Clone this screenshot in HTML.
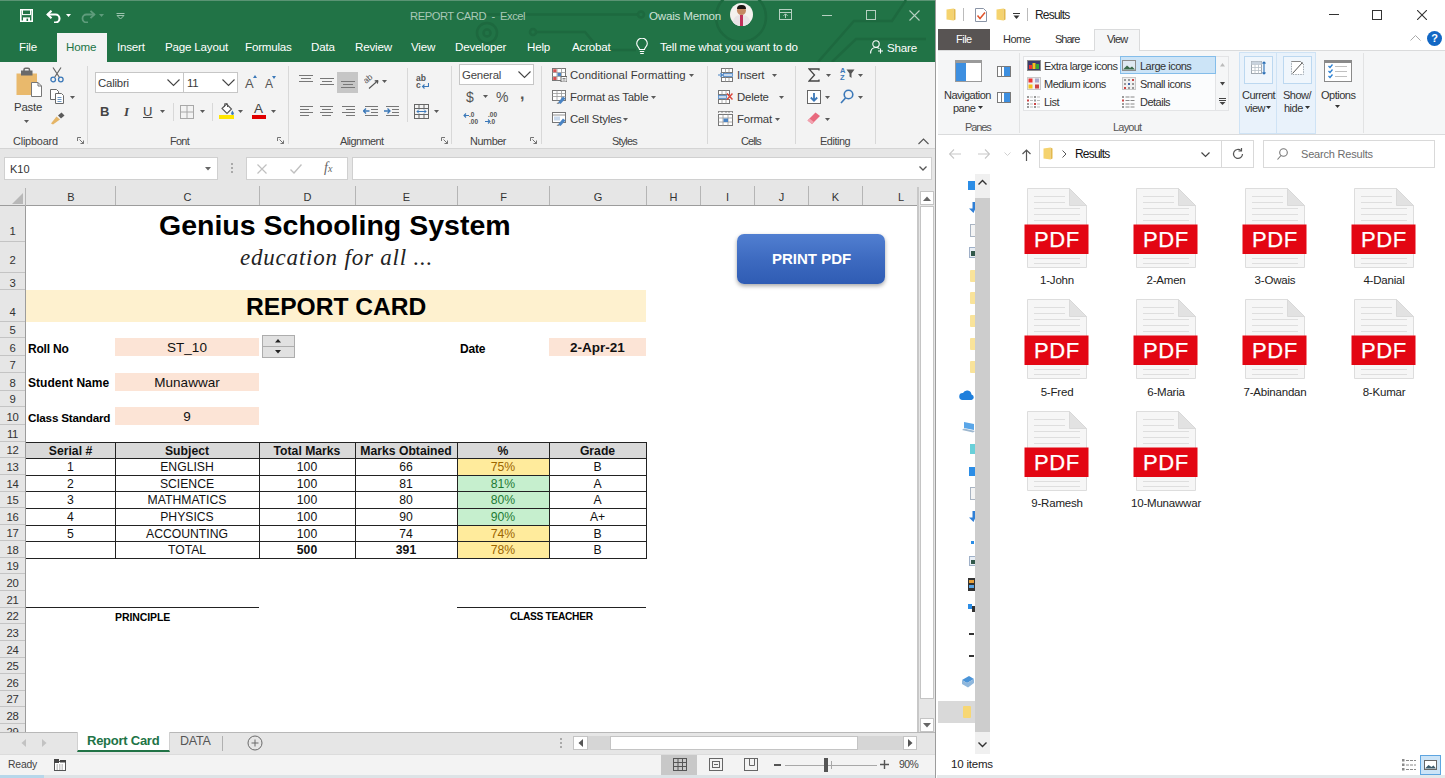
<!DOCTYPE html>
<html>
<head>
<meta charset="utf-8">
<title>Report Card</title>
<style>
*{box-sizing:border-box;margin:0;padding:0}
html,body{width:1445px;height:778px;overflow:hidden;background:#fff;font-family:"Liberation Sans",sans-serif;}
#root{position:absolute;left:0;top:0;width:1445px;height:778px;overflow:hidden;background:#fff}
.a{position:absolute}
.t{position:absolute;white-space:nowrap;line-height:1}
/* ---------- EXCEL ---------- */
#xl{position:absolute;left:0;top:0;width:936px;height:778px;background:#e6e6e6;overflow:hidden}
#xl-title{position:absolute;left:0;top:0;width:936px;height:62px;background:#217346}
#xl-ribbon{position:absolute;left:0;top:62px;width:936px;height:87px;background:#f3f3f3;border-bottom:1px solid #d4d4d4}
.xtab{position:absolute;top:40px;font-size:11.6px;letter-spacing:-0.2px;color:#fff;white-space:nowrap;line-height:14px}
.rl{position:absolute;font-size:10.9px;letter-spacing:-0.2px;color:#444;white-space:nowrap;line-height:12px;top:135px}
.rt{position:absolute;font-size:11.4px;letter-spacing:-0.2px;color:#3a3a3a;white-space:nowrap;line-height:14px}
.vsep{position:absolute;top:66px;width:1px;height:78px;background:#d8d8d8}
.ch{position:absolute;top:186px;height:19px;margin-left:1px;font-size:11px;color:#333;text-align:center;line-height:23px;border-right:1px solid #b5b5b5}
.rh{position:absolute;left:0;width:25px;font-size:11.3px;letter-spacing:-0.4px;color:#333;text-align:center;border-bottom:1px solid #c4c4c4}
.cell{position:absolute;white-space:nowrap;text-align:center;font-size:13px;color:#111;line-height:1}
.hl{position:absolute;height:1px;background:#222}
.vl{position:absolute;width:1px;background:#222}
/* ---------- EXPLORER ---------- */
#ex{position:absolute;left:937px;top:0;width:508px;height:778px;background:#fff;overflow:hidden}
.et{position:absolute;font-size:11px;letter-spacing:-0.5px;color:#222;white-space:nowrap;line-height:13px}
.pdf{position:absolute;width:66px;height:84px}
.pl{position:absolute;font-size:11.5px;letter-spacing:-0.2px;color:#222;white-space:nowrap;text-align:center;width:110px;line-height:13px}
</style>
</head>
<body>
<div id="root">

<!-- ================= EXCEL ================= -->
<div id="xl">
<div id="xl-title"></div>
<div id="xl-ribbon"></div>
<!-- top highlight line -->
<div class="a" style="left:0;top:0;width:936px;height:1px;background:#5a9474"></div>
<!-- faint circuit pattern -->
<svg class="a" style="left:440px;top:0" width="496" height="62" viewBox="0 0 496 62" fill="none" stroke="#1d693f" stroke-width="2.500">
<path d="M-40 14.500H197"/><circle cx="201" cy="14.500" r="3"/>
<circle cx="47" cy="33" r="10"/><circle cx="47" cy="33" r="3.500"/>
<circle cx="93" cy="32" r="3"/><path d="M96 32H145L160 50H196"/>
<circle cx="301" cy="17" r="25"/>
<path d="M378 62L414 21H452L466 0"/><path d="M392 62L416 39H486"/>
</svg>
<!-- QAT icons -->
<svg class="a" style="left:20px;top:9px" width="13" height="13" viewBox="0 0 13 13"><path d="M0.800 0.800h11.400v11.400h-11.400z" fill="none" stroke="#fff" stroke-width="1.600"/><rect x="2.5" y="1" width="8" height="4.6" fill="#217346" stroke="#fff" stroke-width="1"/><rect x="3" y="8.4" width="7" height="4" fill="#fff"/><rect x="6.5" y="9.6" width="1.6" height="2.4" fill="#217346"/></svg>
<svg class="a" style="left:46px;top:10px" width="16" height="13" viewBox="0 0 16 13" fill="none" stroke="#fff" stroke-width="2.100"><path d="M1.5 4.5h8a4 4 0 0 1 0 8h-1.5"/><path d="M5.5 0.8L1.6 4.5l3.9 3.7"/></svg>
<svg class="a" style="left:66px;top:14px" width="5" height="3" viewBox="0 0 5 3"><path d="M0 0h5l-2.500 3z" fill="#fff"/></svg>
<svg class="a" style="left:80px;top:10px" width="16" height="13" viewBox="0 0 16 13" fill="none" stroke="#5f9c7c" stroke-width="1.8"><path d="M14.5 4.5h-8a4 4 0 0 0 0 8h1.5"/><path d="M10.5 0.8l3.9 3.7-3.9 3.7"/></svg>
<svg class="a" style="left:99px;top:14px" width="5" height="3" viewBox="0 0 5 3"><path d="M0 0h5l-2.500 3z" fill="#5f9c7c"/></svg>
<svg class="a" style="left:116px;top:13px" width="9" height="7" viewBox="0 0 9 7" fill="none" stroke="#9cc3ae" stroke-width="1"><path d="M0.5 0.5h8M1 2.5l3.5 3.5 3.5-3.5z"/></svg>
<!-- title text -->
<div class="t" style="left:410px;top:9px;font-size:11.2px;letter-spacing:-0.45px;color:#a9c9b7;line-height:14px">REPORT CARD&nbsp;&nbsp;-&nbsp;&nbsp;Excel</div>
<div class="t" style="left:649px;top:9px;font-size:11.6px;letter-spacing:-0.2px;color:#cfe1d7;line-height:14px">Owais Memon</div>
<!-- avatar -->
<div class="a" style="left:730px;top:3px;width:23px;height:23px;border-radius:50%;background:#f4f1ee;overflow:hidden">
 <div class="a" style="left:7px;top:3px;width:9px;height:9px;border-radius:50%;background:#c48a63"></div>
 <div class="a" style="left:7px;top:2px;width:9px;height:4px;border-radius:4px 4px 0 0;background:#1d1412"></div>
 <div class="a" style="left:3px;top:12px;width:17px;height:14px;border-radius:7px 7px 0 0;background:#e9e4e6"></div>
 <div class="a" style="left:10px;top:12px;width:3px;height:11px;background:#c2325a"></div>
</div>
<!-- window controls -->
<svg class="a" style="left:779px;top:9px" width="13" height="11" viewBox="0 0 13 11" fill="none" stroke="#b5d0c1" stroke-width="1"><rect x="0.5" y="0.5" width="12" height="10"/><path d="M0.5 3.5h12M6.5 9V5M4.5 6.8l2-2 2 2"/></svg>
<div class="a" style="left:822px;top:15px;width:10px;height:1px;background:#b5d0c1"></div>
<div class="a" style="left:866px;top:10px;width:10px;height:10px;border:1px solid #b5d0c1"></div>
<svg class="a" style="left:909px;top:10px" width="11" height="11" viewBox="0 0 11 11" stroke="#b5d0c1" stroke-width="1.1"><path d="M0.5 0.5l10 10M10.5 0.5l-10 10"/></svg>
<!-- tabs -->
<div class="a" style="left:57px;top:33px;width:50px;height:30px;background:#f3f3f3"></div>
<div class="xtab" style="left:19px">File</div>
<div class="xtab" style="left:66px;color:#217346">Home</div>
<div class="xtab" style="left:117px">Insert</div>
<div class="xtab" style="left:165px">Page Layout</div>
<div class="xtab" style="left:245px">Formulas</div>
<div class="xtab" style="left:311px">Data</div>
<div class="xtab" style="left:355px">Review</div>
<div class="xtab" style="left:411px">View</div>
<div class="xtab" style="left:455px">Developer</div>
<div class="xtab" style="left:527px">Help</div>
<div class="xtab" style="left:572px">Acrobat</div>
<svg class="a" style="left:636px;top:38px" width="12" height="17" viewBox="0 0 12 17" fill="none" stroke="#fff" stroke-width="1.1"><path d="M3.5 11.5c0-2-2.8-3-2.8-6a5.3 5.3 0 0 1 10.6 0c0 3-2.800 4-2.800 6z"/><path d="M3.800 13.500h4.400M4.200 15.500h3.600"/></svg>
<div class="xtab" style="left:660px">Tell me what you want to do</div>
<svg class="a" style="left:870px;top:40px" width="14" height="14" viewBox="0 0 14 14" fill="none" stroke="#fff" stroke-width="1.1"><circle cx="6" cy="4" r="3.2"/><path d="M0.600 13.500c0-4 2.500-6 5.400-6 1.500 0 2.600 0.500 3.400 1.200"/><path d="M10.500 8.500v5M8 11h5"/></svg>
<div class="xtab" style="left:887px;top:41px">Share</div>

<!-- ===== Clipboard ===== -->
<svg class="a" style="left:16px;top:67px" width="28" height="31" viewBox="0 0 28 31">
 <rect x="0.500" y="6.500" width="20.500" height="21.500" fill="#e9b96c"/>
 <rect x="5" y="3.500" width="11.500" height="5" fill="#6a6a6a"/><rect x="8" y="1.200" width="5.500" height="4" rx="1.500" fill="none" stroke="#6a6a6a" stroke-width="1.500"/>
 <path d="M15.500 15.500h6.500l3.500 3.500v10.500h-10z" fill="#fff" stroke="#777"/><path d="M22 15.500v3.500h3.500" fill="none" stroke="#777"/>
</svg>
<div class="rt" style="left:14px;top:100px">Paste</div>
<svg class="a" style="left:24px;top:120px" width="5" height="3" viewBox="0 0 5 3"><path d="M0 0h5l-2.500 3z" fill="#5a5a5a"/></svg>
<svg class="a" style="left:50px;top:67px" width="14" height="16" viewBox="0 0 14 16" fill="none"><path d="M3 0.500l6.500 10M11 0.500l-6.500 10" stroke="#666" stroke-width="1.2"/><circle cx="3.200" cy="12.500" r="2.300" stroke="#3b78b8" stroke-width="1.300"/><circle cx="10.800" cy="12.500" r="2.300" stroke="#3b78b8" stroke-width="1.300"/></svg>
<svg class="a" style="left:50px;top:89px" width="14" height="15" viewBox="0 0 14 15" fill="#fff" stroke="#6a6a6a"><path d="M0.500 0.500h6l2 2v8h-8z"/><path d="M5.500 4.500h6l2 2v8h-8z"/><path d="M7.500 8.500h4M7.500 10.500h4M7.500 12.500h4" stroke="#4a7fb5" stroke-width="0.800"/></svg>
<svg class="a" style="left:70px;top:96px" width="5" height="3" viewBox="0 0 5 3"><path d="M0 0h5l-2.500 3z" fill="#5a5a5a"/></svg>
<svg class="a" style="left:50px;top:112px" width="15" height="13" viewBox="0 0 15 13"><path d="M8 3.500l3.500-3 3 3-3.500 3z" fill="#5a5a5a"/><path d="M1 11.500l5.500-7 3.500 3-7 5z" fill="#e5b566"/></svg>
<div class="rl" style="left:13px">Clipboard</div>
<svg class="a" style="left:77px;top:137px" width="7" height="7" viewBox="0 0 7 7" fill="none" stroke="#666" stroke-width="0.900"><path d="M0.500 4V0.500H4M2.500 2.500l4 4M6.500 3.500v3h-3"/></svg>
<div class="vsep" style="left:87px"></div>

<!-- ===== Font ===== -->
<div class="a" style="left:95px;top:72px;width:89px;height:21px;background:#fff;border:1px solid #c6c6c6"></div>
<div class="a" style="left:184px;top:72px;width:54px;height:21px;background:#fff;border:1px solid #c6c6c6;border-left:none"></div>
<div class="rt" style="left:98px;top:76px">Calibri</div>
<div class="rt" style="left:187px;top:76px">11</div>
<svg class="a" style="left:167px;top:79px" width="13" height="8" viewBox="0 0 13 8" fill="none" stroke="#444" stroke-width="1.100"><path d="M0.500 0.500l6 6 6-6"/></svg>
<svg class="a" style="left:222px;top:79px" width="13" height="8" viewBox="0 0 13 8" fill="none" stroke="#444" stroke-width="1.100"><path d="M0.500 0.500l6 6 6-6"/></svg>
<div class="t" style="left:245px;top:77px;font-size:13px;color:#555">A</div>
<svg class="a" style="left:253px;top:75px" width="4" height="3" viewBox="0 0 4 3"><path d="M0 3h4l-2-3z" fill="#3b78b8"/></svg>
<div class="t" style="left:265px;top:78px;font-size:12px;color:#555">A</div>
<svg class="a" style="left:272px;top:76px" width="4" height="3" viewBox="0 0 4 3"><path d="M0 0h4l-2 3z" fill="#3b78b8"/></svg>
<div class="t" style="left:100px;top:105px;font-size:13px;font-weight:bold;color:#444">B</div>
<div class="t" style="left:124px;top:105px;font-size:13px;font-style:italic;font-family:'Liberation Serif',serif;font-weight:bold;color:#444">I</div>
<div class="t" style="left:143px;top:105px;font-size:13px;color:#444;text-decoration:underline">U</div>
<svg class="a" style="left:160px;top:110px" width="5" height="3" viewBox="0 0 5 3"><path d="M0 0h5l-2.500 3z" fill="#5a5a5a"/></svg>
<div class="a" style="left:173px;top:103px;width:1px;height:18px;background:#d8d8d8"></div>
<svg class="a" style="left:180px;top:105px" width="14" height="14" viewBox="0 0 14 14" fill="none" stroke="#a8a8a8" stroke-width="1"><rect x="0.500" y="0.500" width="13" height="13"/><path d="M7 0.500v13M0.500 7h13"/></svg>
<svg class="a" style="left:200px;top:110px" width="5" height="3" viewBox="0 0 5 3"><path d="M0 0h5l-2.500 3z" fill="#5a5a5a"/></svg>
<div class="a" style="left:212px;top:103px;width:1px;height:18px;background:#d8d8d8"></div>
<svg class="a" style="left:219px;top:103px" width="16" height="12" viewBox="0 0 16 12" fill="none"><path d="M3 5.500l4.500-4.500 5 5-4.500 4.500z" fill="#fff" stroke="#555" stroke-width="1.100"/><path d="M5.500 4V1.500a1.500 1.500 0 0 1 3 0V4" stroke="#555" stroke-width="1"/><path d="M13.300 7.500c0.900 1.300 1.600 2.200 1.600 3a1.400 1.400 0 0 1-2.800 0c0-0.800 0.600-1.700 1.200-3z" fill="#3b78b8"/></svg>
<div class="a" style="left:219px;top:115px;width:15px;height:4px;background:#ffe600"></div>
<svg class="a" style="left:238px;top:110px" width="5" height="3" viewBox="0 0 5 3"><path d="M0 0h5l-2.500 3z" fill="#5a5a5a"/></svg>
<div class="t" style="left:254px;top:102px;font-size:13.500px;color:#444">A</div>
<div class="a" style="left:252px;top:115px;width:14px;height:4px;background:#e00000"></div>
<svg class="a" style="left:271px;top:110px" width="5" height="3" viewBox="0 0 5 3"><path d="M0 0h5l-2.500 3z" fill="#5a5a5a"/></svg>
<div class="rl" style="left:170px;letter-spacing:-0.7px">Font</div>
<svg class="a" style="left:277px;top:137px" width="7" height="7" viewBox="0 0 7 7" fill="none" stroke="#666" stroke-width="0.900"><path d="M0.500 4V0.500H4M2.500 2.500l4 4M6.500 3.500v3h-3"/></svg>
<div class="vsep" style="left:288px"></div>

<!-- ===== Alignment ===== -->
<svg class="a" style="left:299px;top:75px" width="14" height="8" viewBox="0 0 14 8" stroke="#777" stroke-width="1"><path d="M0 0.500h14M2 3.500h10M0 6.500h14"/></svg>
<svg class="a" style="left:320px;top:78px" width="14" height="8" viewBox="0 0 14 8" stroke="#777" stroke-width="1"><path d="M0 0.500h14M2 3.500h10M0 6.500h14"/></svg>
<div class="a" style="left:337px;top:72px;width:21px;height:21px;background:#c6c6c6"></div>
<svg class="a" style="left:341px;top:81px" width="14" height="8" viewBox="0 0 14 8" stroke="#777" stroke-width="1"><path d="M0 0.500h14M2 3.500h10M0 6.500h14"/></svg>
<svg class="a" style="left:364px;top:73px" width="17" height="17" viewBox="0 0 17 17" fill="none"><text x="0" y="0" transform="translate(2,11) rotate(-40)" font-family="Liberation Sans, sans-serif" font-size="8.500" fill="#555">ab</text><path d="M5 15.500l9-8M14 7.500l-3.300 0.400M14 7.500l-0.600 3.200" stroke="#555" stroke-width="1.100"/></svg>
<svg class="a" style="left:382px;top:80px" width="5" height="3" viewBox="0 0 5 3"><path d="M0 0h5l-2.500 3z" fill="#5a5a5a"/></svg>
<div class="t" style="left:416px;top:75px;font-size:8.500px;font-weight:bold;color:#555;line-height:7px">ab<br>c</div>
<svg class="a" style="left:421px;top:83px" width="8" height="6" viewBox="0 0 8 6" fill="none" stroke="#3b78b8" stroke-width="1.100"><path d="M7.500 0v3.500h-6M3.500 1.500l-2 2 2 2"/></svg>
<svg class="a" style="left:300px;top:106px" width="13" height="11" viewBox="0 0 13 11" stroke="#777" stroke-width="1"><path d="M0 0.500h13M0 3.500h9M0 6.500h13M0 9.500h9"/></svg>
<svg class="a" style="left:320px;top:106px" width="13" height="11" viewBox="0 0 13 11" stroke="#777" stroke-width="1"><path d="M0 0.500h13M2 3.500h9M0 6.500h13M2 9.500h9"/></svg>
<svg class="a" style="left:342px;top:106px" width="13" height="11" viewBox="0 0 13 11" stroke="#777" stroke-width="1"><path d="M0 0.500h13M4 3.500h9M0 6.500h13M4 9.500h9"/></svg>
<svg class="a" style="left:363px;top:106px" width="15" height="11" viewBox="0 0 15 11" fill="none"><path d="M2 0.500h13M8 3.500h7M8 6.500h7M2 9.500h13" stroke="#777"/><path d="M6.500 5h-6M3 2.500l-2.500 2.500 2.500 2.500" stroke="#3b78b8" stroke-width="1.300"/></svg>
<svg class="a" style="left:384px;top:106px" width="15" height="11" viewBox="0 0 15 11" fill="none"><path d="M2 0.500h13M8 3.500h7M8 6.500h7M2 9.500h13" stroke="#777"/><path d="M0 5h6M3.500 2.500l2.500 2.500-2.500 2.500" stroke="#3b78b8" stroke-width="1.300"/></svg>
<div class="a" style="left:407px;top:68px;width:1px;height:54px;background:#d8d8d8"></div>
<svg class="a" style="left:414px;top:104px" width="15" height="15" viewBox="0 0 15 15" fill="none" stroke="#666"><rect x="0.500" y="0.500" width="14" height="14"/><path d="M0.500 4.500h14M0.500 10.500h14M5 0.500v4M10 0.500v4M5 10.500v4M10 10.500v4"/><path d="M3 7.500h9M5 5.500l-2 2 2 2M10 5.500l2 2-2 2" stroke="#3b78b8"/></svg>
<svg class="a" style="left:434px;top:110px" width="5" height="3" viewBox="0 0 5 3"><path d="M0 0h5l-2.500 3z" fill="#5a5a5a"/></svg>
<div class="rl" style="left:340px;letter-spacing:-0.55px">Alignment</div>
<svg class="a" style="left:441px;top:137px" width="7" height="7" viewBox="0 0 7 7" fill="none" stroke="#666" stroke-width="0.900"><path d="M0.500 4V0.500H4M2.500 2.500l4 4M6.500 3.500v3h-3"/></svg>
<div class="vsep" style="left:451px"></div>

<!-- ===== Number ===== -->
<div class="a" style="left:459px;top:64px;width:75px;height:21px;background:#fff;border:1px solid #c6c6c6"></div>
<div class="rt" style="left:462px;top:68px;color:#444">General</div>
<svg class="a" style="left:518px;top:71px" width="13" height="8" viewBox="0 0 13 8" fill="none" stroke="#444" stroke-width="1.100"><path d="M0.500 0.500l6 6 6-6"/></svg>
<div class="t" style="left:466px;top:90px;font-size:14px;color:#555">$</div>
<svg class="a" style="left:483px;top:95px" width="5" height="3" viewBox="0 0 5 3"><path d="M0 0h5l-2.500 3z" fill="#5a5a5a"/></svg>
<div class="t" style="left:496px;top:90px;font-size:14px;color:#555">%</div>
<div class="t" style="left:520px;top:86px;font-size:16px;font-weight:bold;color:#555">,</div>
<div class="t" style="left:469px;top:112px;font-size:6.500px;color:#555;line-height:6.500px;font-weight:bold">.0<br>.00</div>
<svg class="a" style="left:463px;top:113px" width="6" height="5" viewBox="0 0 6 5" fill="none" stroke="#3b78b8" stroke-width="1.100"><path d="M6 2.500h-5M3 0.500l-2 2 2 2"/></svg>
<div class="t" style="left:488px;top:112px;font-size:6.500px;color:#555;line-height:6.500px;font-weight:bold">.00<br>&nbsp;.0</div>
<svg class="a" style="left:485px;top:119px" width="6" height="5" viewBox="0 0 6 5" fill="none" stroke="#3b78b8" stroke-width="1.100"><path d="M0 2.500h5M3 0.500l2 2-2 2"/></svg>
<div class="rl" style="left:470px;letter-spacing:-0.45px">Number</div>
<svg class="a" style="left:530px;top:137px" width="7" height="7" viewBox="0 0 7 7" fill="none" stroke="#666" stroke-width="0.900"><path d="M0.500 4V0.500H4M2.500 2.500l4 4M6.500 3.500v3h-3"/></svg>
<div class="vsep" style="left:541px"></div>

<!-- ===== Styles ===== -->
<svg class="a" style="left:552px;top:68px" width="15" height="14" viewBox="0 0 15 14" fill="none"><rect x="0.500" y="0.500" width="13" height="12" fill="#fff" stroke="#777"/><path d="M0.500 4.500h13M0.500 8.500h13M5 0.500v12M9.500 0.500v12" stroke="#999" stroke-width="0.800"/><rect x="1.200" y="1.200" width="3.300" height="3" fill="#d65050"/><rect x="5.500" y="5" width="3.500" height="3" fill="#4a84c4"/><rect x="1.200" y="9" width="3.300" height="3" fill="#d65050"/><rect x="9" y="8.500" width="6" height="5.500" fill="#fff" stroke="#666"/><path d="M10.500 10.500h3M10.500 12h3" stroke="#666" stroke-width="0.800"/></svg>
<div class="rt" style="left:570px;top:68px;letter-spacing:0.05px">Conditional Formatting</div>
<svg class="a" style="left:689px;top:74px" width="5" height="3" viewBox="0 0 5 3"><path d="M0 0h5l-2.500 3z" fill="#5a5a5a"/></svg>
<svg class="a" style="left:552px;top:90px" width="15" height="14" viewBox="0 0 15 14" fill="none"><rect x="0.500" y="0.500" width="13" height="10" fill="#fff" stroke="#777"/><path d="M0.500 3.500h13M0.500 6.500h13M5 0.500v10M9.500 0.500v10" stroke="#999" stroke-width="0.800"/><path d="M6 12.500l5-6 2.500 2-5 5.500z" fill="#4a84c4"/><path d="M4.500 13.500l1.500-1 1.500 1.300z" fill="#555"/></svg>
<div class="rt" style="left:570px;top:90px">Format as Table</div>
<svg class="a" style="left:651px;top:96px" width="5" height="3" viewBox="0 0 5 3"><path d="M0 0h5l-2.500 3z" fill="#5a5a5a"/></svg>
<svg class="a" style="left:552px;top:112px" width="15" height="14" viewBox="0 0 15 14" fill="none"><rect x="0.500" y="0.500" width="13" height="10" fill="#fff" stroke="#777"/><path d="M0.500 3h13" stroke="#777" stroke-width="0.800"/><rect x="2" y="4.500" width="6" height="4" fill="#c9d9ec"/><path d="M6 12.500l5-6 2.500 2-5 5.500z" fill="#4a84c4"/><path d="M4.500 13.500l1.500-1 1.500 1.300z" fill="#555"/></svg>
<div class="rt" style="left:570px;top:112px">Cell Styles</div>
<svg class="a" style="left:623px;top:118px" width="5" height="3" viewBox="0 0 5 3"><path d="M0 0h5l-2.500 3z" fill="#5a5a5a"/></svg>
<div class="rl" style="left:612px;letter-spacing:-0.8px">Styles</div>
<div class="vsep" style="left:707px"></div>

<!-- ===== Cells ===== -->
<svg class="a" style="left:718px;top:68px" width="15" height="14" viewBox="0 0 15 14" fill="none"><rect x="3.500" y="0.500" width="11" height="4" fill="#fff" stroke="#777"/><rect x="3.500" y="9.500" width="11" height="4" fill="#fff" stroke="#777"/><path d="M7.500 0.500v4M11 0.500v4M7.500 9.500v4M11 9.500v4" stroke="#999" stroke-width="0.800"/><rect x="5.500" y="5.500" width="9" height="3" fill="#c9d9ec" stroke="#4a84c4" stroke-width="0.800"/><path d="M0 7h4M2.500 5l2 2-2 2" stroke="#4a84c4" stroke-width="1.200"/></svg>
<div class="rt" style="left:737px;top:68px">Insert</div>
<svg class="a" style="left:772px;top:74px" width="5" height="3" viewBox="0 0 5 3"><path d="M0 0h5l-2.500 3z" fill="#5a5a5a"/></svg>
<svg class="a" style="left:718px;top:90px" width="15" height="14" viewBox="0 0 15 14" fill="none"><rect x="0.500" y="0.500" width="11" height="4" fill="#fff" stroke="#777"/><rect x="0.500" y="9.500" width="11" height="4" fill="#fff" stroke="#777"/><path d="M4 0.500v4M8 0.500v4M4 9.500v4M8 9.500v4" stroke="#999" stroke-width="0.800"/><rect x="0.500" y="5.500" width="8" height="3" fill="#c9d9ec" stroke="#4a84c4" stroke-width="0.800"/><path d="M9 3.500l5.500 6M14.500 3.500l-5.500 6" stroke="#d9453a" stroke-width="1.500"/></svg>
<div class="rt" style="left:737px;top:90px">Delete</div>
<svg class="a" style="left:779px;top:96px" width="5" height="3" viewBox="0 0 5 3"><path d="M0 0h5l-2.500 3z" fill="#5a5a5a"/></svg>
<svg class="a" style="left:718px;top:111px" width="15" height="15" viewBox="0 0 15 15" fill="none"><path d="M0.500 0.500h14M0.500 0v2M14.500 0v2M4 0v2M8 0v2M11 0v2" stroke="#777" stroke-width="0.800"/><rect x="0.500" y="3.500" width="14" height="11" fill="#fff" stroke="#777"/><path d="M0.500 7h14M0.500 11h14M5 3.500v11M10 3.500v11" stroke="#999" stroke-width="0.800"/><rect x="5.500" y="7.500" width="4.500" height="3.500" fill="#4a84c4"/></svg>
<div class="rt" style="left:737px;top:112px">Format</div>
<svg class="a" style="left:775px;top:118px" width="5" height="3" viewBox="0 0 5 3"><path d="M0 0h5l-2.500 3z" fill="#5a5a5a"/></svg>
<div class="rl" style="left:741px;letter-spacing:-0.85px">Cells</div>
<div class="vsep" style="left:795px"></div>

<!-- ===== Editing ===== -->
<svg class="a" style="left:808px;top:68px" width="12" height="14" viewBox="0 0 12 14" fill="none" stroke="#444" stroke-width="1.300"><path d="M11 2.500V1H1l5.500 6L1 13h10v-1.500"/></svg>
<svg class="a" style="left:826px;top:74px" width="5" height="3" viewBox="0 0 5 3"><path d="M0 0h5l-2.500 3z" fill="#5a5a5a"/></svg>
<div class="t" style="left:840px;top:67px;font-size:7.500px;font-weight:bold;color:#3b78b8;line-height:7px">A<br>Z</div>
<svg class="a" style="left:846px;top:69px" width="9" height="10" viewBox="0 0 9 10"><path d="M0.500 0.500h8l-3 4v4.500l-2-1.500v-3z" fill="#555"/></svg>
<svg class="a" style="left:858px;top:74px" width="5" height="3" viewBox="0 0 5 3"><path d="M0 0h5l-2.500 3z" fill="#5a5a5a"/></svg>
<svg class="a" style="left:807px;top:90px" width="14" height="14" viewBox="0 0 14 14" fill="none"><rect x="0.500" y="0.500" width="13" height="13" fill="#fff" stroke="#666"/><path d="M7 3v7.500M3.800 7.500l3.200 3.300 3.200-3.300" stroke="#3b78b8" stroke-width="1.800"/></svg>
<svg class="a" style="left:825px;top:96px" width="5" height="3" viewBox="0 0 5 3"><path d="M0 0h5l-2.500 3z" fill="#5a5a5a"/></svg>
<svg class="a" style="left:840px;top:89px" width="14" height="15" viewBox="0 0 14 15" fill="none" stroke="#3b78b8" stroke-width="1.600"><circle cx="8.500" cy="5.500" r="4.300"/><path d="M5.500 9l-4.500 5"/></svg>
<svg class="a" style="left:858px;top:96px" width="5" height="3" viewBox="0 0 5 3"><path d="M0 0h5l-2.500 3z" fill="#5a5a5a"/></svg>
<svg class="a" style="left:807px;top:112px" width="14" height="12" viewBox="0 0 14 12"><path d="M0.500 8.500l8-8 4.500 3.500-8 8z" fill="#e8697d"/><path d="M0.500 8.500l2-2 4.500 3.500-2 2z" fill="#f2a3b0"/></svg>
<svg class="a" style="left:825px;top:118px" width="5" height="3" viewBox="0 0 5 3"><path d="M0 0h5l-2.500 3z" fill="#5a5a5a"/></svg>
<div class="rl" style="left:820px;letter-spacing:-0.45px">Editing</div>
<div class="vsep" style="left:875px"></div>
<svg class="a" style="left:918px;top:138px" width="11" height="7" viewBox="0 0 11 7" fill="none" stroke="#555" stroke-width="1.100"><path d="M0.500 6l5-5 5 5"/></svg>

<!-- formula bar -->
<div class="a" style="left:4px;top:157px;width:214px;height:23px;background:#fff;border:1px solid #d0d0d0"></div>
<div class="t" style="left:10px;top:164px;font-size:11px;color:#333">K10</div>
<svg class="a" style="left:205px;top:167px" width="6" height="4" viewBox="0 0 6 4"><path d="M0 0h6l-3 3.500z" fill="#666"/></svg>
<div class="a" style="left:231px;top:163px;width:2px;height:2px;background:#aaa;box-shadow:0 4px 0 #aaa,0 8px 0 #aaa"></div>
<div class="a" style="left:246px;top:157px;width:102px;height:23px;background:#fff;border:1px solid #d0d0d0"></div>
<svg class="a" style="left:257px;top:164px" width="10" height="10" viewBox="0 0 10 10" stroke="#c0c0c0" stroke-width="1.200"><path d="M0.500 0.500l9 9M9.500 0.500l-9 9"/></svg>
<svg class="a" style="left:290px;top:164px" width="12" height="10" viewBox="0 0 12 10" fill="none" stroke="#c0c0c0" stroke-width="1.400"><path d="M0.500 5.500l3.500 3.500 7.500-8.500"/></svg>
<div class="t" style="left:324px;top:161px;font-size:14px;font-style:italic;font-family:'Liberation Serif',serif;color:#666">f<span style="font-size:10px">x</span></div>
<div class="a" style="left:352px;top:157px;width:580px;height:23px;background:#fff;border:1px solid #d0d0d0"></div>
<svg class="a" style="left:919px;top:166px" width="8" height="5" viewBox="0 0 8 5" fill="none" stroke="#555" stroke-width="1.300"><path d="M0.500 0.500l3.500 3.500 3.500-3.500"/></svg>
<!-- headers -->
<div class="a" style="left:0;top:187px;width:917px;height:19px;background:#e6e6e6;border-bottom:1px solid #9c9c9c"></div>
<svg class="a" style="left:12px;top:193px" width="11" height="11" viewBox="0 0 11 11"><path d="M11 0v11h-11z" fill="#b8b8b8"/></svg>
<div class="a" style="left:25px;top:188px;width:1px;height:18px;background:#b5b5b5"></div>
<div class="ch" style="left:26px;width:89px">B</div>
<div class="ch" style="left:115px;width:144px">C</div>
<div class="ch" style="left:259px;width:96px">D</div>
<div class="ch" style="left:355px;width:102px">E</div>
<div class="ch" style="left:457px;width:92px">F</div>
<div class="ch" style="left:549px;width:97px">G</div>
<div class="ch" style="left:646px;width:54px">H</div>
<div class="ch" style="left:700px;width:54px">I</div>
<div class="ch" style="left:754px;width:54px">J</div>
<div class="ch" style="left:808px;width:54px">K</div>
<div class="ch" style="left:862px;width:55px;padding-left:21px;border-right:none">L</div>
<!-- sheet white -->
<div class="a" style="left:26px;top:206px;width:891px;height:526px;background:#fff"></div>
<div class="a" style="left:0;top:206px;width:26px;height:526px;background:#e6e6e6;border-right:1px solid #9c9c9c"></div>
<div class="rh" style="top:206px;height:36px;line-height:51px">1</div>
<div class="rh" style="top:242px;height:31px;line-height:37px">2</div>
<div class="rh" style="top:273px;height:17px;line-height:20px">3</div>
<div class="rh" style="top:290px;height:32px;line-height:45px">4</div>
<div class="rh" style="top:322px;height:16px;line-height:17px">5</div>
<div class="rh" style="top:338px;height:18px;line-height:21px">6</div>
<div class="rh" style="top:356px;height:17px;line-height:19px">7</div>
<div class="rh" style="top:373px;height:18px;line-height:21px">8</div>
<div class="rh" style="top:391px;height:16px;line-height:17px">9</div>
<div class="rh" style="top:407px;height:18px;line-height:21px">10</div>
<div class="rh" style="top:425px;height:17px;line-height:19px">11</div>
<div class="rh" style="top:442px;height:16px;line-height:17px">12</div>
<div class="rh" style="top:458px;height:17px;line-height:19px">13</div>
<div class="rh" style="top:475px;height:17px;line-height:19px">14</div>
<div class="rh" style="top:492px;height:16px;line-height:17px">15</div>
<div class="rh" style="top:508px;height:17px;line-height:19px">16</div>
<div class="rh" style="top:525px;height:16px;line-height:17px">17</div>
<div class="rh" style="top:541px;height:17px;line-height:19px">18</div>
<div class="rh" style="top:558px;height:16px;line-height:17px">19</div>
<div class="rh" style="top:574px;height:17px;line-height:19px">20</div>
<div class="rh" style="top:591px;height:17px;line-height:19px">21</div>
<div class="rh" style="top:608px;height:16px;line-height:17px">22</div>
<div class="rh" style="top:624px;height:17px;line-height:19px">23</div>
<div class="rh" style="top:641px;height:17px;line-height:19px">24</div>
<div class="rh" style="top:658px;height:16px;line-height:17px">25</div>
<div class="rh" style="top:674px;height:17px;line-height:19px">26</div>
<div class="rh" style="top:691px;height:16px;line-height:17px">27</div>
<div class="rh" style="top:707px;height:17px;line-height:19px">28</div>
<div class="rh" style="top:724px;height:16px;line-height:17px">29</div>
<!-- sheet content -->
<div class="t" id="ttl" style="left:159px;top:208.5px;font-size:28.5px;font-weight:bold;color:#000;line-height:32px">Genius Schooling System</div>
<div class="t" id="edu" style="left:240px;top:244px;font-size:23px;font-style:italic;font-family:'Liberation Serif',serif;color:#222;line-height:28px;letter-spacing:0.8px">education for all ...</div>
<div class="a" style="left:26px;top:290px;width:620px;height:32px;background:#fef1cf"></div>
<div class="t" id="rc" style="left:246px;top:293px;font-size:24.6px;font-weight:bold;color:#000;line-height:28px">REPORT CARD</div>
<div class="t" style="left:28px;top:343px;font-size:12px;font-weight:bold;color:#000;letter-spacing:-0.2px">Roll No</div>
<div class="t" style="left:28px;top:377px;font-size:12px;font-weight:bold;color:#000;letter-spacing:0.05px">Student Name</div>
<div class="t" style="left:28px;top:412px;font-size:11.7px;font-weight:bold;color:#000;letter-spacing:-0.2px">Class Standard</div>
<div class="t" style="left:460px;top:343px;font-size:12px;font-weight:bold;color:#000;letter-spacing:-0.2px">Date</div>
<div class="cell" style="left:115px;top:338px;width:144px;height:18px;background:#fce4d6;line-height:19px;font-size:13.5px">ST_10</div>
<div class="cell" style="left:115px;top:373px;width:144px;height:18px;background:#fce4d6;line-height:19px;font-size:13.5px">Munawwar</div>
<div class="cell" style="left:115px;top:407px;width:144px;height:18px;background:#fce4d6;line-height:19px;font-size:13.5px">9</div>
<div class="cell" style="left:549px;top:338px;width:97px;height:18px;background:#fce4d6;line-height:19px;font-size:13.5px;font-weight:bold">2-Apr-21</div>
<div class="a" style="left:262px;top:335px;width:33px;height:12px;background:#e1e1e1;border:1px solid #adadad"></div>
<div class="a" style="left:262px;top:346px;width:33px;height:12px;background:#e1e1e1;border:1px solid #adadad"></div>
<svg class="a" style="left:275px;top:339px" width="6" height="4" viewBox="0 0 6 4"><path d="M0 3.500h6l-3-3.500z" fill="#222"/></svg>
<svg class="a" style="left:275px;top:350px" width="6" height="4" viewBox="0 0 6 4"><path d="M0 0h6l-3 3.500z" fill="#222"/></svg>
<div class="a" style="left:26px;top:442px;width:620px;height:16px;background:#d9d9d9"></div>
<div class="cell" style="left:457px;top:458px;width:92px;height:17px;background:#ffeb9c;color:#9c6500;font-size:12.2px;line-height:19px">75%</div>
<div class="cell" style="left:457px;top:475px;width:92px;height:16px;background:#c6efce;color:#1e7b34;font-size:12.2px;line-height:18px">81%</div>
<div class="cell" style="left:457px;top:491px;width:92px;height:17px;background:#c6efce;color:#1e7b34;font-size:12.2px;line-height:19px">80%</div>
<div class="cell" style="left:457px;top:508px;width:92px;height:17px;background:#c6efce;color:#1e7b34;font-size:12.2px;line-height:19px">90%</div>
<div class="cell" style="left:457px;top:525px;width:92px;height:16px;background:#ffeb9c;color:#9c6500;font-size:12.2px;line-height:18px">74%</div>
<div class="cell" style="left:457px;top:541px;width:92px;height:17px;background:#ffeb9c;color:#9c6500;font-size:12.2px;line-height:19px">78%</div>
<div class="cell" style="left:26px;top:442px;width:89px;font-size:12.2px;font-weight:bold;line-height:18px">Serial #</div>
<div class="cell" style="left:115px;top:442px;width:144px;font-size:12.2px;font-weight:bold;line-height:18px">Subject</div>
<div class="cell" style="left:259px;top:442px;width:96px;font-size:12.2px;font-weight:bold;line-height:18px">Total Marks</div>
<div class="cell" style="left:355px;top:442px;width:102px;font-size:12.2px;font-weight:bold;line-height:18px">Marks Obtained</div>
<div class="cell" style="left:457px;top:442px;width:92px;font-size:12.2px;font-weight:bold;line-height:18px">%</div>
<div class="cell" style="left:549px;top:442px;width:97px;font-size:12.2px;font-weight:bold;line-height:18px">Grade</div>
<div class="cell" style="left:26px;top:458px;width:89px;font-size:12.2px;line-height:19px">1</div>
<div class="cell" style="left:115px;top:458px;width:144px;font-size:12.2px;line-height:19px">ENGLISH</div>
<div class="cell" style="left:259px;top:458px;width:96px;font-size:12.2px;line-height:19px">100</div>
<div class="cell" style="left:355px;top:458px;width:102px;font-size:12.2px;line-height:19px">66</div>
<div class="cell" style="left:549px;top:458px;width:97px;font-size:12.2px;line-height:19px">B</div>
<div class="cell" style="left:26px;top:475px;width:89px;font-size:12.2px;line-height:18px">2</div>
<div class="cell" style="left:115px;top:475px;width:144px;font-size:12.2px;line-height:18px">SCIENCE</div>
<div class="cell" style="left:259px;top:475px;width:96px;font-size:12.2px;line-height:18px">100</div>
<div class="cell" style="left:355px;top:475px;width:102px;font-size:12.2px;line-height:18px">81</div>
<div class="cell" style="left:549px;top:475px;width:97px;font-size:12.2px;line-height:18px">A</div>
<div class="cell" style="left:26px;top:491px;width:89px;font-size:12.2px;line-height:19px">3</div>
<div class="cell" style="left:115px;top:491px;width:144px;font-size:12.2px;line-height:19px">MATHMATICS</div>
<div class="cell" style="left:259px;top:491px;width:96px;font-size:12.2px;line-height:19px">100</div>
<div class="cell" style="left:355px;top:491px;width:102px;font-size:12.2px;line-height:19px">80</div>
<div class="cell" style="left:549px;top:491px;width:97px;font-size:12.2px;line-height:19px">A</div>
<div class="cell" style="left:26px;top:508px;width:89px;font-size:12.2px;line-height:19px">4</div>
<div class="cell" style="left:115px;top:508px;width:144px;font-size:12.2px;line-height:19px">PHYSICS</div>
<div class="cell" style="left:259px;top:508px;width:96px;font-size:12.2px;line-height:19px">100</div>
<div class="cell" style="left:355px;top:508px;width:102px;font-size:12.2px;line-height:19px">90</div>
<div class="cell" style="left:549px;top:508px;width:97px;font-size:12.2px;line-height:19px">A+</div>
<div class="cell" style="left:26px;top:525px;width:89px;font-size:12.2px;line-height:18px">5</div>
<div class="cell" style="left:115px;top:525px;width:144px;font-size:12.2px;line-height:18px">ACCOUNTING</div>
<div class="cell" style="left:259px;top:525px;width:96px;font-size:12.2px;line-height:18px">100</div>
<div class="cell" style="left:355px;top:525px;width:102px;font-size:12.2px;line-height:18px">74</div>
<div class="cell" style="left:549px;top:525px;width:97px;font-size:12.2px;line-height:18px">B</div>
<div class="cell" style="left:115px;top:541px;width:144px;font-size:12.2px;line-height:19px">TOTAL</div>
<div class="cell" style="left:259px;top:541px;width:96px;font-size:12.2px;line-height:19px"><b>500</b></div>
<div class="cell" style="left:355px;top:541px;width:102px;font-size:12.2px;line-height:19px"><b>391</b></div>
<div class="cell" style="left:549px;top:541px;width:97px;font-size:12.2px;line-height:19px">B</div>
<div class="hl" style="left:26px;top:442px;width:621px"></div>
<div class="hl" style="left:26px;top:458px;width:621px"></div>
<div class="hl" style="left:26px;top:475px;width:621px"></div>
<div class="hl" style="left:26px;top:491px;width:621px"></div>
<div class="hl" style="left:26px;top:508px;width:621px"></div>
<div class="hl" style="left:26px;top:525px;width:621px"></div>
<div class="hl" style="left:26px;top:541px;width:621px"></div>
<div class="hl" style="left:26px;top:558px;width:621px"></div>
<div class="vl" style="left:115px;top:442px;height:117px"></div>
<div class="vl" style="left:259px;top:442px;height:117px"></div>
<div class="vl" style="left:355px;top:442px;height:117px"></div>
<div class="vl" style="left:457px;top:442px;height:117px"></div>
<div class="vl" style="left:549px;top:442px;height:117px"></div>
<div class="vl" style="left:646px;top:442px;height:117px"></div>
<div class="hl" style="left:26px;top:607px;width:233px"></div>
<div class="hl" style="left:457px;top:607px;width:189px"></div>
<div class="t" style="left:115px;top:612px;font-size:10.5px;font-weight:bold;color:#000;letter-spacing:-0.1px">PRINCIPLE</div>
<div class="t" style="left:510px;top:612px;font-size:10.2px;font-weight:bold;color:#000;letter-spacing:-0.3px">CLASS TEACHER</div>
<div class="a" style="left:737px;top:234px;width:148px;height:50px;border-radius:7px;background:linear-gradient(#517fd1,#3c69bf 55%,#2f5cb4);box-shadow:0 2px 4px rgba(0,0,0,.35)"></div>
<div class="t" style="left:772px;top:251px;font-size:15px;font-weight:bold;color:#fff;letter-spacing:0px">PRINT PDF</div>
<div class="a" style="left:917px;top:187px;width:19px;height:545px;background:#e6e6e6;border-left:2px solid #c8c8c8"></div>
<div class="a" style="left:920px;top:191px;width:14px;height:14px;background:#fff;border:1px solid #c4c4c4"></div>
<svg class="a" style="left:923px;top:196px" width="8" height="5" viewBox="0 0 8 5"><path d="M0 5h8l-4-4.500z" fill="#666"/></svg>
<div class="a" style="left:920px;top:206px;width:14px;height:493px;background:#fff;border:1px solid #c4c4c4"></div>
<div class="a" style="left:920px;top:718px;width:14px;height:14px;background:#fff;border:1px solid #c4c4c4"></div>
<svg class="a" style="left:923px;top:723px" width="8" height="5" viewBox="0 0 8 5"><path d="M0 0h8l-4 4.500z" fill="#666"/></svg>
<!-- tab bar -->
<div class="a" style="left:0;top:732px;width:936px;height:23px;background:#e6e6e6;border-top:1px solid #b8b8b8"></div>
<svg class="a" style="left:21px;top:739px" width="5" height="8" viewBox="0 0 5 8"><path d="M5 0v8l-4.500-4z" fill="#c2c2c2"/></svg>
<svg class="a" style="left:42px;top:739px" width="5" height="8" viewBox="0 0 5 8"><path d="M0 0v8l4.500-4z" fill="#c2c2c2"/></svg>
<div class="a" style="left:77px;top:732px;width:93px;height:20px;background:#fff;border-bottom:2px solid #217346;border-left:1px solid #d0d0d0;border-right:1px solid #d0d0d0"></div>
<div class="t" style="left:87px;top:734px;font-size:13px;font-weight:bold;color:#217346;letter-spacing:-0.25px;line-height:14px">Report Card</div>
<div class="t" style="left:180px;top:734px;font-size:12.5px;color:#555;letter-spacing:-0.2px;line-height:14px">DATA</div>
<div class="a" style="left:222px;top:736px;width:1px;height:15px;background:#b0b0b0"></div>
<svg class="a" style="left:247px;top:735px" width="16" height="16" viewBox="0 0 16 16" fill="none" stroke="#6a6a6a" stroke-width="1"><circle cx="8" cy="8" r="7"/><path d="M8 4.500v7M4.500 8h7"/></svg>
<div class="a" style="left:560px;top:738px;width:2px;height:2px;background:#aaa;box-shadow:0 4px 0 #aaa,0 8px 0 #aaa"></div>
<div class="a" style="left:588px;top:736px;width:316px;height:14px;background:#d6d6d6"></div>
<div class="a" style="left:573px;top:736px;width:15px;height:14px;background:#fff;border:1px solid #c4c4c4"></div>
<svg class="a" style="left:578px;top:739px" width="5" height="8" viewBox="0 0 5 8"><path d="M5 0v8l-4.500-4z" fill="#555"/></svg>
<div class="a" style="left:610px;top:736px;width:248px;height:14px;background:#fff;border:1px solid #c4c4c4"></div>
<div class="a" style="left:903px;top:736px;width:14px;height:14px;background:#fff;border:1px solid #c4c4c4"></div>
<svg class="a" style="left:908px;top:739px" width="5" height="8" viewBox="0 0 5 8"><path d="M0 0v8l4.500-4z" fill="#555"/></svg>
<!-- status bar -->
<div class="a" style="left:0;top:754px;width:936px;height:21px;background:#f3f3f3;border-top:1px solid #dcdcdc"></div>
<div class="a" style="left:0;top:775px;width:936px;height:3px;background:#dde3e6"></div>
<div class="a" style="left:0;top:775px;width:44px;height:3px;background:#b7d7ea"></div>
<div class="t" style="left:8px;top:759px;font-size:10.4px;color:#444;letter-spacing:-0.2px;line-height:12px">Ready</div>
<svg class="a" style="left:54px;top:759px" width="12" height="12" viewBox="0 0 12 12" fill="none"><rect x="0.500" y="2.500" width="11" height="9" fill="#fff" stroke="#555"/><rect x="0" y="0" width="5" height="4" fill="#444"/><rect x="6" y="1" width="6" height="2.500" fill="#444"/><path d="M2.500 6h7M2.500 8h7M2.500 10h7" stroke="#777" stroke-width="0.800" stroke-dasharray="1.500 1"/></svg>
<div class="a" style="left:661px;top:755px;width:36px;height:20px;background:#c8c8c8"></div>
<svg class="a" style="left:673px;top:758px" width="14" height="13" viewBox="0 0 14 13" fill="none" stroke="#555" stroke-width="1"><rect x="0.500" y="0.500" width="13" height="12"/><path d="M0.500 4.500h13M0.500 8.500h13M5 0.500v12M9.500 0.500v12"/></svg>
<svg class="a" style="left:709px;top:758px" width="14" height="13" viewBox="0 0 14 13" fill="none" stroke="#666" stroke-width="1"><rect x="0.500" y="0.500" width="13" height="12"/><rect x="3.500" y="3.500" width="7" height="6"/><path d="M5 6.500h4"/></svg>
<svg class="a" style="left:744px;top:758px" width="14" height="13" viewBox="0 0 14 13" fill="none" stroke="#666" stroke-width="1"><rect x="0.500" y="0.500" width="13" height="12"/><path d="M5.500 0.500v7h5v-7"/></svg>
<div class="a" style="left:774px;top:764px;width:7px;height:2px;background:#555"></div>
<div class="a" style="left:785px;top:765px;width:92px;height:1px;background:#a8a8a8"></div>
<div class="a" style="left:831px;top:761px;width:1px;height:8px;background:#a8a8a8"></div>
<div class="a" style="left:824px;top:758px;width:4px;height:14px;background:#555"></div>
<svg class="a" style="left:880px;top:760px" width="9" height="9" viewBox="0 0 9 9" stroke="#555" stroke-width="1.400"><path d="M4.500 0v9M0 4.500h9"/></svg>
<div class="t" style="left:899px;top:759px;font-size:10.4px;color:#444;letter-spacing:-0.5px;line-height:12px">90%</div>
<div class="a" style="left:935px;top:0;width:2px;height:778px;background:#9c9c9c"></div>
</div>

<!-- ================= EXPLORER ================= -->
<div id="ex">
<!-- window edge -->

<svg class="a" style="left:9px;top:8px" width="10" height="13" viewBox="0 0 10 13"><path d="M0.500 1.500l7-1v12l-7-1z" fill="#f5d36e"/><path d="M7.500 0.500l2 1v10l-2 1z" fill="#e3b94d"/></svg>
<div class="a" style="left:26px;top:8px;width:1px;height:13px;background:#bbb"></div>
<svg class="a" style="left:38px;top:8px" width="12" height="14" viewBox="0 0 12 14" fill="none"><path d="M0.500 0.500h8l3 3v10h-11z" fill="#fff" stroke="#8a94a6"/><path d="M2.500 7.500l2.500 3 5-6" stroke="#e0532c" stroke-width="1.500"/></svg>
<svg class="a" style="left:59px;top:8px" width="10" height="13" viewBox="0 0 10 13"><path d="M0.500 1.500l7-1v12l-7-1z" fill="#f5d36e"/><path d="M7.500 0.500l2 1v10l-2 1z" fill="#e3b94d"/></svg>
<svg class="a" style="left:76px;top:13px" width="7" height="6" viewBox="0 0 7 6"><path d="M0 0.500h7" stroke="#333"/><path d="M0.500 2.500h6l-3 3.500z" fill="#333"/></svg>
<div class="a" style="left:90px;top:8px;width:1px;height:13px;background:#bbb"></div>
<div class="et" style="left:98px;top:9px;font-size:12px;letter-spacing:-0.8px">Results</div>
<div class="a" style="left:392px;top:14px;width:10px;height:1px;background:#333"></div>
<div class="a" style="left:435px;top:10px;width:10px;height:10px;border:1px solid #333"></div>
<svg class="a" style="left:480px;top:10px" width="10" height="10" viewBox="0 0 10 10" stroke="#333" stroke-width="1.100"><path d="M0 0l10 10M10 0l-10 10"/></svg>
<div class="a" style="left:1px;top:50px;width:507px;height:85px;background:#f5f6f7;border-top:1px solid #dadbdc;border-bottom:1px solid #dadbdc"></div>
<div class="a" style="left:1px;top:29px;width:52px;height:21px;background:#585453"></div>
<div class="et" style="left:19px;top:33px;color:#fff">File</div>
<div class="et" style="left:66px;top:33px;color:#333">Home</div>
<div class="et" style="left:118px;top:33px;color:#333;letter-spacing:-1px">Share</div>
<div class="a" style="left:157px;top:29px;width:46px;height:22px;background:#f5f6f7;border:1px solid #dadbdc;border-bottom:none"></div>
<div class="et" style="left:170px;top:33px;color:#333;letter-spacing:-0.8px">View</div>
<svg class="a" style="left:473px;top:35px" width="11" height="6" viewBox="0 0 11 6" fill="none" stroke="#aaa" stroke-width="1"><path d="M0.500 5.500l5-5 5 5"/></svg>
<div class="a" style="left:490px;top:31px;width:15px;height:15px;border-radius:50%;background:#1267c4;color:#fff;font-size:11px;font-weight:bold;text-align:center;line-height:15px">?</div>
<div class="a" style="left:18px;top:60px;width:27px;height:22px;background:#fff;border:1px solid #9a9a9a;border-top:3px solid #9a9a9a"></div>
<div class="a" style="left:19px;top:63px;width:10px;height:18px;background:#3d8fe0"></div>
<div class="et" style="left:7px;top:89px;color:#333">Navigation</div>
<div class="et" style="left:16px;top:102px;color:#333">pane</div>
<svg class="a" style="left:41px;top:106px" width="5" height="3" viewBox="0 0 5 3"><path d="M0 0h5l-2.500 3z" fill="#333"/></svg>
<div class="a" style="left:60px;top:66px;width:14px;height:11px;background:#fff;border:1px solid #7a7a7a"></div>
<div class="a" style="left:67px;top:67px;width:6px;height:9px;background:#3d8fe0"></div>
<div class="a" style="left:64px;top:67px;width:1px;height:9px;background:#7a7a7a"></div>
<div class="a" style="left:60px;top:92px;width:14px;height:11px;background:#fff;border:1px solid #7a7a7a"></div>
<div class="a" style="left:67px;top:93px;width:6px;height:9px;background:#3d8fe0"></div>
<div class="a" style="left:64px;top:93px;width:1px;height:9px;background:#7a7a7a"></div>
<div class="et" style="left:28px;top:121px;color:#555;letter-spacing:-1.1px">Panes</div>
<div class="a" style="left:82px;top:53px;width:1px;height:80px;background:#e2e3e4"></div>
<div class="a" style="left:86px;top:56px;width:193px;height:55px;background:#fbfcfd;border:1px solid #e3e4e6"></div>
<div class="a" style="left:279px;top:56px;width:13px;height:55px;background:#f5f6f7;border:1px solid #e3e4e6;border-left:none"></div>
<div class="a" style="left:183px;top:56px;width:96px;height:18px;background:#cce4f7;border:1px solid #84bdea"></div>
<svg class="a" style="left:90px;top:60px" width="14" height="11" viewBox="0 0 14 11"><rect x="0.500" y="0.500" width="13" height="10" fill="#3b3b6d" stroke="#8c8c8c"/><rect x="2" y="5" width="3" height="4" fill="#e33"/><rect x="5.500" y="3" width="3" height="6" fill="#f6c21a"/><rect x="9" y="4" width="3" height="5" fill="#3a3"/></svg>
<div class="et" style="left:107px;top:60px;color:#333;letter-spacing:-0.5px">Extra large icons</div>
<svg class="a" style="left:185px;top:60px" width="14" height="11" viewBox="0 0 14 11"><rect x="0.500" y="0.500" width="13" height="10" fill="#dfe9f2" stroke="#8c8c8c"/><path d="M1 9.500l4-4 3 2.500 2-1.500 3 3z" fill="#3b6b4b"/></svg>
<div class="et" style="left:203px;top:60px;color:#333">Large icons</div>
<svg class="a" style="left:90px;top:77px" width="14" height="13" viewBox="0 0 14 13"><rect x="0.500" y="0.500" width="13" height="12" fill="#f0f0f0" stroke="#c8c8c8"/><rect x="1.500" y="1.500" width="4" height="4" fill="#e33"/><rect x="8" y="1.500" width="4" height="4" fill="#aac"/><rect x="1.500" y="7.500" width="4" height="4" fill="#f6c21a"/><rect x="8" y="7.500" width="4" height="4" fill="#c44"/></svg>
<div class="et" style="left:107px;top:78px;color:#333">Medium icons</div>
<svg class="a" style="left:185px;top:77px" width="14" height="13" viewBox="0 0 14 13"><rect x="0.500" y="0.500" width="13" height="12" fill="#f0f0f0" stroke="#c8c8c8"/><g fill="#999"><rect x="2" y="2" width="2" height="2"/><rect x="6" y="2" width="2" height="2"/><rect x="10" y="2" width="2" height="2" fill="#c44"/><rect x="2" y="6" width="2" height="2"/><rect x="6" y="6" width="2" height="2" fill="#46a"/><rect x="10" y="6" width="2" height="2"/><rect x="2" y="10" width="2" height="2" fill="#c44"/><rect x="6" y="10" width="2" height="2"/><rect x="10" y="10" width="2" height="2"/></g></svg>
<div class="et" style="left:203px;top:78px;color:#333">Small icons</div>
<svg class="a" style="left:90px;top:96px" width="14" height="12" viewBox="0 0 14 12"><g fill="#999"><rect x="0" y="0" width="2" height="2"/><rect x="0" y="3.500" width="2" height="2" fill="#c44"/><rect x="0" y="7" width="2" height="2"/><rect x="0" y="10" width="2" height="2"/><rect x="7" y="0" width="2" height="2"/><rect x="7" y="3.500" width="2" height="2"/><rect x="7" y="7" width="2" height="2" fill="#c44"/><rect x="7" y="10" width="2" height="2"/></g><g stroke="#bbb"><path d="M3 1h3M3 4.500h3M3 8h3M3 11h3M10 1h3M10 4.500h3M10 8h3M10 11h3"/></g></svg>
<div class="et" style="left:107px;top:96px;color:#333">List</div>
<svg class="a" style="left:185px;top:96px" width="14" height="12" viewBox="0 0 14 12"><g fill="#999"><rect x="0" y="0" width="2" height="2"/><rect x="0" y="3.500" width="2" height="2" fill="#c44"/><rect x="0" y="7" width="2" height="2"/><rect x="0" y="10" width="2" height="2"/></g><g stroke="#888"><path d="M3.500 1h10M3.500 4.500h10M3.500 8h10M3.500 11h10" stroke-dasharray="4 1"/></g></svg>
<div class="et" style="left:203px;top:96px;color:#333">Details</div>
<svg class="a" style="left:283px;top:63px" width="5" height="4" viewBox="0 0 5 4"><path d="M0 3.500h5l-2.500-3.500z" fill="#bbb"/></svg>
<svg class="a" style="left:283px;top:82px" width="5" height="4" viewBox="0 0 5 4"><path d="M0 0h5l-2.500 3.500z" fill="#444"/></svg>
<svg class="a" style="left:282px;top:98px" width="7" height="7" viewBox="0 0 7 7"><path d="M0 0.500h7M0 2.500h7" stroke="#444"/><path d="M0.500 4h6l-3 3z" fill="#444"/></svg>
<div class="et" style="left:176px;top:121px;color:#555;letter-spacing:-0.8px">Layout</div>

<div class="a" style="left:302px;top:52px;width:38px;height:82px;background:#e9f2fb;border:1px solid #cfe3f5"></div>
<div class="a" style="left:340px;top:52px;width:39px;height:82px;background:#e9f2fb;border:1px solid #cfe3f5;border-left:none"></div>
<div class="a" style="left:307px;top:56px;width:29px;height:28px;background:#f0f6fc;border:1px solid #bcd8f0"></div>
<div class="a" style="left:346px;top:56px;width:29px;height:28px;background:#f0f6fc;border:1px solid #bcd8f0"></div>
<svg class="a" style="left:314px;top:61px" width="15" height="14" viewBox="0 0 15 14" fill="none"><rect x="0.500" y="0.500" width="10" height="12" fill="#fff" stroke="#a0a8b0"/><path d="M0.500 3.500h10M0.500 6.500h10M0.500 9.500h10M4 0.500v12M7.500 0.500v12" stroke="#b8c0c8" stroke-width="0.800"/><rect x="0.500" y="0.500" width="10" height="3" fill="#c9d3de"/><path d="M13 1v12M11.500 2.500l1.500-1.500 1.500 1.500M11.500 11.500l1.500 1.500 1.500-1.500" stroke="#2b6fb5" stroke-width="1.100"/></svg>
<svg class="a" style="left:354px;top:61px" width="13" height="14" viewBox="0 0 13 14" fill="none"><path d="M0.500 0.500h9l3 3v10h-12z" fill="#fff" stroke="#a0a8b0" stroke-dasharray="1.500 1"/><path d="M1.500 12.500l10-11" stroke="#555" stroke-width="1"/><path d="M0.500 0.500h9l3 3" stroke="#888"/></svg>
<div class="et" style="left:305px;top:89px;color:#333">Current</div>
<div class="et" style="left:308px;top:102px;color:#333">view</div>
<svg class="a" style="left:329px;top:106px" width="5" height="3" viewBox="0 0 5 3"><path d="M0 0h5l-2.500 3z" fill="#333"/></svg>
<div class="et" style="left:346px;top:89px;color:#333">Show/</div>
<div class="et" style="left:347px;top:102px;color:#333">hide</div>
<svg class="a" style="left:368px;top:106px" width="5" height="3" viewBox="0 0 5 3"><path d="M0 0h5l-2.500 3z" fill="#333"/></svg>
<svg class="a" style="left:387px;top:60px" width="28" height="22" viewBox="0 0 28 22" fill="none"><rect x="0.500" y="0.500" width="27" height="21" fill="#fff" stroke="#8a8a8a"/><rect x="0.500" y="0.500" width="27" height="2.500" fill="#8a8a8a"/><path d="M4.500 6l1.500 1.500 2.500-3M4.500 11l1.500 1.500 2.500-3M4.500 16l1.500 1.500 2.500-3" stroke="#2b7fd1" stroke-width="1.300"/><path d="M11 6.500h12M11 11.500h12M11 16.500h12" stroke="#c0c0c0"/></svg>
<div class="et" style="left:384px;top:89px;color:#333">Options</div>
<svg class="a" style="left:398px;top:105px" width="5" height="3" viewBox="0 0 5 3"><path d="M0 0h5l-2.500 3z" fill="#333"/></svg>
<div class="a" style="left:426px;top:53px;width:1px;height:80px;background:#e2e3e4"></div>
<svg class="a" style="left:12px;top:149px" width="12" height="10" viewBox="0 0 12 10" fill="none" stroke="#c8c8c8" stroke-width="1.100"><path d="M12 5h-11M5 0.500l-4.500 4.500 4.500 4.500"/></svg>
<svg class="a" style="left:41px;top:149px" width="12" height="10" viewBox="0 0 12 10" fill="none" stroke="#c8c8c8" stroke-width="1.100"><path d="M0 5h11M7 0.500l4.500 4.500-4.500 4.500"/></svg>
<svg class="a" style="left:67px;top:152px" width="7" height="4" viewBox="0 0 7 4" fill="none" stroke="#d0d0d0" stroke-width="1"><path d="M0.500 0.500l3 3 3-3"/></svg>
<svg class="a" style="left:85px;top:149px" width="9" height="12" viewBox="0 0 9 12" fill="none" stroke="#555" stroke-width="1.200"><path d="M4.500 12v-11M0.500 5l4-4 4 4"/></svg>
<div class="a" style="left:102px;top:140px;width:183px;height:28px;background:#fff;border:1px solid #d9d9d9"></div>
<div class="a" style="left:284px;top:140px;width:33px;height:28px;background:#fff;border:1px solid #d9d9d9"></div>
<svg class="a" style="left:106px;top:147px" width="10" height="13" viewBox="0 0 10 13"><path d="M0.500 1.500l7-1v12l-7-1z" fill="#f5d36e"/><path d="M7.500 0.500l2 1v10l-2 1z" fill="#e3b94d"/></svg>
<svg class="a" style="left:125px;top:150px" width="5" height="8" viewBox="0 0 5 8" fill="none" stroke="#555" stroke-width="1"><path d="M0.500 0.500l3.500 3.500-3.500 3.500"/></svg>
<div class="et" style="left:138px;top:148px;font-size:12px;letter-spacing:-0.8px;color:#111">Results</div>
<svg class="a" style="left:264px;top:152px" width="9" height="6" viewBox="0 0 9 6" fill="none" stroke="#444" stroke-width="1.200"><path d="M0.500 0.500l4 4 4-4"/></svg>
<svg class="a" style="left:295px;top:148px" width="12" height="12" viewBox="0 0 12 12" fill="none" stroke="#555" stroke-width="1.200"><path d="M10.500 6a4.500 4.500 0 1 1-1.500-3.400"/><path d="M9.500 0v3h-3" /></svg>
<div class="a" style="left:326px;top:140px;width:172px;height:28px;background:#fff;border:1px solid #d9d9d9"></div>
<svg class="a" style="left:340px;top:148px" width="11" height="12" viewBox="0 0 11 12" fill="none" stroke="#777" stroke-width="1.100"><circle cx="6.500" cy="4.500" r="3.800"/><path d="M4 7.500l-3.500 4"/></svg>
<div class="et" style="left:364px;top:148px;letter-spacing:-0.2px;color:#6d6d6d">Search Results</div>
<!-- nav pane sliver -->
<div class="a" style="left:31px;top:181px;width:7px;height:9px;background:#2b8de6"></div>
<svg class="a" style="left:32px;top:202px" width="6" height="11" viewBox="0 0 6 11"><path d="M3.500 0h2.500v7h-2.500zM0 6.500h6v1l-1.500 3.500z" fill="#2f7fd6"/></svg>
<div class="a" style="left:33px;top:224px;width:5px;height:13px;background:#f4f4f4;border:1px solid #a9b4c2;border-right:none"></div>
<div class="a" style="left:32px;top:247px;width:6px;height:11px;background:#e8eef5;border:1px solid #9fb0c8;border-right:none"></div>
<div class="a" style="left:34px;top:251px;width:4px;height:5px;background:#31584a"></div>
<div class="a" style="left:33px;top:270px;width:5px;height:12px;background:#f9e39a;border-radius:1px 0 0 1px"></div>
<div class="a" style="left:33px;top:292px;width:5px;height:12px;background:#f9e39a;border-radius:1px 0 0 1px"></div>
<div class="a" style="left:33px;top:315px;width:5px;height:12px;background:#f9e39a;border-radius:1px 0 0 1px"></div>
<div class="a" style="left:33px;top:338px;width:5px;height:12px;background:#f9e39a;border-radius:1px 0 0 1px"></div>
<div class="a" style="left:33px;top:361px;width:5px;height:12px;background:#f9e39a;border-radius:1px 0 0 1px"></div>
<svg class="a" style="left:22px;top:390px" width="15" height="10" viewBox="0 0 15 10"><path d="M3.500 10a3.500 3.500 0 0 1 0.500-7 4.500 4.500 0 0 1 8.500 1.500 2.800 2.800 0 0 1 0 5.500z" fill="#1e7fdc"/></svg>
<svg class="a" style="left:25px;top:421px" width="13" height="12" viewBox="0 0 13 12"><path d="M2 1l10 2v6l-10-2z" fill="#5aa6e8"/><path d="M0 9l11 2.500 2-1.500-11-2.500z" fill="#9db7cf"/></svg>
<div class="a" style="left:33px;top:444px;width:5px;height:10px;background:#69d0d9"></div>
<div class="a" style="left:32px;top:467px;width:6px;height:9px;background:#2b8de6"></div>
<div class="a" style="left:33px;top:487px;width:5px;height:13px;background:#f4f4f4;border:1px solid #a9b4c2;border-right:none"></div>
<svg class="a" style="left:32px;top:511px" width="6" height="11" viewBox="0 0 6 11"><path d="M3.500 0h2.500v7h-2.500zM0 6.500h6v1l-1.500 3.500z" fill="#2f7fd6"/></svg>
<div class="a" style="left:34px;top:541px;width:3px;height:3px;background:#2b8de6"></div>
<div class="a" style="left:32px;top:556px;width:6px;height:10px;background:#e8eef5;border:1px solid #9fb0c8;border-right:none"></div>
<div class="a" style="left:34px;top:560px;width:4px;height:4px;background:#31584a"></div>
<div class="a" style="left:31px;top:578px;width:7px;height:13px;background:#333"></div>
<div class="a" style="left:32px;top:580px;width:5px;height:3px;background:#e8a03a"></div>
<div class="a" style="left:32px;top:585px;width:5px;height:3px;background:#5aa6e8"></div>
<div class="a" style="left:31px;top:604px;width:4px;height:5px;background:#2b8de6"></div>
<div class="a" style="left:35px;top:606px;width:3px;height:6px;background:#333"></div>
<div class="a" style="left:32px;top:633px;width:5px;height:2px;background:#333"></div>
<div class="a" style="left:32px;top:655px;width:5px;height:2px;background:#333"></div>
<svg class="a" style="left:24px;top:675px" width="14" height="13" viewBox="0 0 14 13"><path d="M1 5l7-4 5 3-7 4z" fill="#4a94d8"/><path d="M1 5v4l6 3.500 6-4.500v-4l-7 4z" fill="#8fb7dc"/></svg>
<div class="a" style="left:1px;top:701px;width:38px;height:22px;background:#d9d9d9"></div>
<div class="a" style="left:26px;top:706px;width:8px;height:12px;background:#f7d774;border-radius:1px"></div>
<!-- scrollbar -->
<div class="a" style="left:38px;top:174px;width:15px;height:580px;background:#f0f0f0"></div>
<div class="a" style="left:38px;top:198px;width:15px;height:534px;background:#cdcdcd"></div>
<svg class="a" style="left:41px;top:179px" width="9" height="6" viewBox="0 0 9 6" fill="none" stroke="#333" stroke-width="1.400"><path d="M0.500 5.500l4-4 4 4"/></svg>
<svg class="a" style="left:41px;top:742px" width="9" height="6" viewBox="0 0 9 6" fill="none" stroke="#333" stroke-width="1.400"><path d="M0.500 0.500l4 4 4-4"/></svg>
<!-- pdf files -->
<svg class="a" style="left:87px;top:187.5px" width="66" height="80" viewBox="0 0 66 80"><path d="M3.500 0.500h42l17 17v62h-59z" fill="#f6f6f6" stroke="#dddddd"/><path d="M45.500 0.500v17h17z" fill="#e2e2e2" stroke="#d6d6d6" stroke-width="0.800"/><path d="M10 8.500h31M10 14.500h31M10 20.500h46M10 26.500h46M10 32.500h46M10 70.500h46M10 75.500h46" stroke="#dedede"/><rect x="0.500" y="36.500" width="64" height="29.500" fill="#e30613"/><text x="32.800" y="59.300" text-anchor="middle" font-family="Liberation Sans, sans-serif" font-size="22" letter-spacing="0.600" fill="#fff" stroke="#fff" stroke-width="0.250">PDF</text></svg>
<div class="pl" style="left:65px;top:274px">1-John</div>
<svg class="a" style="left:196px;top:187.5px" width="66" height="80" viewBox="0 0 66 80"><path d="M3.500 0.500h42l17 17v62h-59z" fill="#f6f6f6" stroke="#dddddd"/><path d="M45.500 0.500v17h17z" fill="#e2e2e2" stroke="#d6d6d6" stroke-width="0.800"/><path d="M10 8.500h31M10 14.500h31M10 20.500h46M10 26.500h46M10 32.500h46M10 70.500h46M10 75.500h46" stroke="#dedede"/><rect x="0.500" y="36.500" width="64" height="29.500" fill="#e30613"/><text x="32.800" y="59.300" text-anchor="middle" font-family="Liberation Sans, sans-serif" font-size="22" letter-spacing="0.600" fill="#fff" stroke="#fff" stroke-width="0.250">PDF</text></svg>
<div class="pl" style="left:174px;top:274px">2-Amen</div>
<svg class="a" style="left:305px;top:187.5px" width="66" height="80" viewBox="0 0 66 80"><path d="M3.500 0.500h42l17 17v62h-59z" fill="#f6f6f6" stroke="#dddddd"/><path d="M45.500 0.500v17h17z" fill="#e2e2e2" stroke="#d6d6d6" stroke-width="0.800"/><path d="M10 8.500h31M10 14.500h31M10 20.500h46M10 26.500h46M10 32.500h46M10 70.500h46M10 75.500h46" stroke="#dedede"/><rect x="0.500" y="36.500" width="64" height="29.500" fill="#e30613"/><text x="32.800" y="59.300" text-anchor="middle" font-family="Liberation Sans, sans-serif" font-size="22" letter-spacing="0.600" fill="#fff" stroke="#fff" stroke-width="0.250">PDF</text></svg>
<div class="pl" style="left:283px;top:274px">3-Owais</div>
<svg class="a" style="left:414px;top:187.5px" width="66" height="80" viewBox="0 0 66 80"><path d="M3.500 0.500h42l17 17v62h-59z" fill="#f6f6f6" stroke="#dddddd"/><path d="M45.500 0.500v17h17z" fill="#e2e2e2" stroke="#d6d6d6" stroke-width="0.800"/><path d="M10 8.500h31M10 14.500h31M10 20.500h46M10 26.500h46M10 32.500h46M10 70.500h46M10 75.500h46" stroke="#dedede"/><rect x="0.500" y="36.500" width="64" height="29.500" fill="#e30613"/><text x="32.800" y="59.300" text-anchor="middle" font-family="Liberation Sans, sans-serif" font-size="22" letter-spacing="0.600" fill="#fff" stroke="#fff" stroke-width="0.250">PDF</text></svg>
<div class="pl" style="left:392px;top:274px">4-Danial</div>
<svg class="a" style="left:87px;top:299px" width="66" height="80" viewBox="0 0 66 80"><path d="M3.500 0.500h42l17 17v62h-59z" fill="#f6f6f6" stroke="#dddddd"/><path d="M45.500 0.500v17h17z" fill="#e2e2e2" stroke="#d6d6d6" stroke-width="0.800"/><path d="M10 8.500h31M10 14.500h31M10 20.500h46M10 26.500h46M10 32.500h46M10 70.500h46M10 75.500h46" stroke="#dedede"/><rect x="0.500" y="36.500" width="64" height="29.500" fill="#e30613"/><text x="32.800" y="59.300" text-anchor="middle" font-family="Liberation Sans, sans-serif" font-size="22" letter-spacing="0.600" fill="#fff" stroke="#fff" stroke-width="0.250">PDF</text></svg>
<div class="pl" style="left:65px;top:385.5px">5-Fred</div>
<svg class="a" style="left:196px;top:299px" width="66" height="80" viewBox="0 0 66 80"><path d="M3.500 0.500h42l17 17v62h-59z" fill="#f6f6f6" stroke="#dddddd"/><path d="M45.500 0.500v17h17z" fill="#e2e2e2" stroke="#d6d6d6" stroke-width="0.800"/><path d="M10 8.500h31M10 14.500h31M10 20.500h46M10 26.500h46M10 32.500h46M10 70.500h46M10 75.500h46" stroke="#dedede"/><rect x="0.500" y="36.500" width="64" height="29.500" fill="#e30613"/><text x="32.800" y="59.300" text-anchor="middle" font-family="Liberation Sans, sans-serif" font-size="22" letter-spacing="0.600" fill="#fff" stroke="#fff" stroke-width="0.250">PDF</text></svg>
<div class="pl" style="left:174px;top:385.5px">6-Maria</div>
<svg class="a" style="left:305px;top:299px" width="66" height="80" viewBox="0 0 66 80"><path d="M3.500 0.500h42l17 17v62h-59z" fill="#f6f6f6" stroke="#dddddd"/><path d="M45.500 0.500v17h17z" fill="#e2e2e2" stroke="#d6d6d6" stroke-width="0.800"/><path d="M10 8.500h31M10 14.500h31M10 20.500h46M10 26.500h46M10 32.500h46M10 70.500h46M10 75.500h46" stroke="#dedede"/><rect x="0.500" y="36.500" width="64" height="29.500" fill="#e30613"/><text x="32.800" y="59.300" text-anchor="middle" font-family="Liberation Sans, sans-serif" font-size="22" letter-spacing="0.600" fill="#fff" stroke="#fff" stroke-width="0.250">PDF</text></svg>
<div class="pl" style="left:283px;top:385.5px">7-Abinandan</div>
<svg class="a" style="left:414px;top:299px" width="66" height="80" viewBox="0 0 66 80"><path d="M3.500 0.500h42l17 17v62h-59z" fill="#f6f6f6" stroke="#dddddd"/><path d="M45.500 0.500v17h17z" fill="#e2e2e2" stroke="#d6d6d6" stroke-width="0.800"/><path d="M10 8.500h31M10 14.500h31M10 20.500h46M10 26.500h46M10 32.500h46M10 70.500h46M10 75.500h46" stroke="#dedede"/><rect x="0.500" y="36.500" width="64" height="29.500" fill="#e30613"/><text x="32.800" y="59.300" text-anchor="middle" font-family="Liberation Sans, sans-serif" font-size="22" letter-spacing="0.600" fill="#fff" stroke="#fff" stroke-width="0.250">PDF</text></svg>
<div class="pl" style="left:392px;top:385.5px">8-Kumar</div>
<svg class="a" style="left:87px;top:410.5px" width="66" height="80" viewBox="0 0 66 80"><path d="M3.500 0.500h42l17 17v62h-59z" fill="#f6f6f6" stroke="#dddddd"/><path d="M45.500 0.500v17h17z" fill="#e2e2e2" stroke="#d6d6d6" stroke-width="0.800"/><path d="M10 8.500h31M10 14.500h31M10 20.500h46M10 26.500h46M10 32.500h46M10 70.500h46M10 75.500h46" stroke="#dedede"/><rect x="0.500" y="36.500" width="64" height="29.500" fill="#e30613"/><text x="32.800" y="59.300" text-anchor="middle" font-family="Liberation Sans, sans-serif" font-size="22" letter-spacing="0.600" fill="#fff" stroke="#fff" stroke-width="0.250">PDF</text></svg>
<div class="pl" style="left:65px;top:497px">9-Ramesh</div>
<svg class="a" style="left:196px;top:410.5px" width="66" height="80" viewBox="0 0 66 80"><path d="M3.500 0.500h42l17 17v62h-59z" fill="#f6f6f6" stroke="#dddddd"/><path d="M45.500 0.500v17h17z" fill="#e2e2e2" stroke="#d6d6d6" stroke-width="0.800"/><path d="M10 8.500h31M10 14.500h31M10 20.500h46M10 26.500h46M10 32.500h46M10 70.500h46M10 75.500h46" stroke="#dedede"/><rect x="0.500" y="36.500" width="64" height="29.500" fill="#e30613"/><text x="32.800" y="59.300" text-anchor="middle" font-family="Liberation Sans, sans-serif" font-size="22" letter-spacing="0.600" fill="#fff" stroke="#fff" stroke-width="0.250">PDF</text></svg>
<div class="pl" style="left:174px;top:497px">10-Munawwar</div>
<!-- status -->
<div class="et" style="left:14px;top:758px;font-size:11.500px;letter-spacing:-0.200px;color:#222">10 items</div>
<svg class="a" style="left:465px;top:759px" width="14" height="12" viewBox="0 0 14 12"><g fill="#8a8a8a"><rect x="0" y="0" width="2.500" height="2.500"/><rect x="0" y="4.500" width="2.500" height="2.500"/><rect x="0" y="9" width="2.500" height="2.500"/></g><path d="M4 1.500h10M4 6h10M4 10.500h10" stroke="#8a8a8a" stroke-dasharray="3 1"/></svg>
<div class="a" style="left:483px;top:755px;width:21px;height:20px;background:#cce4f7;border:1px solid #5ea5e0"></div>
<svg class="a" style="left:487px;top:760px" width="13" height="10" viewBox="0 0 13 10"><rect x="0.500" y="0.500" width="12" height="9" fill="#fff" stroke="#666"/><path d="M1 8.500l3.500-3.500 3 2 2-1.500 2.500 3z" fill="#3b5b6b"/></svg>
<div class="a" style="left:0;top:775px;width:508px;height:3px;background:#e4e8ea"></div>
</div>

</div>
</body>
</html>
